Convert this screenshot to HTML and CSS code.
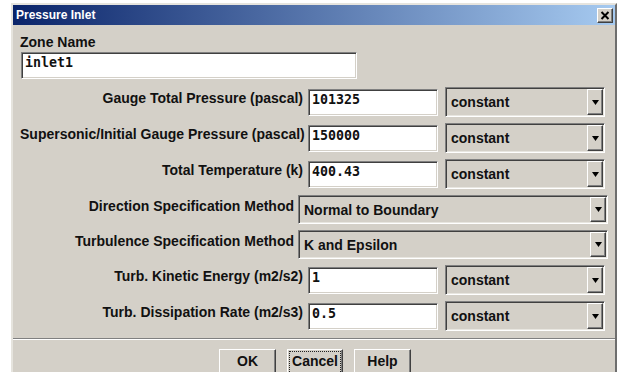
FILE: index.html
```html
<!DOCTYPE html>
<html lang="en">
<head>
  <meta charset="UTF-8">
  <title>Pressure Inlet</title>
  <link rel="stylesheet" href="styles.css">
</head>
<body>
  <div class="window">
    <div class="titlebar">
      <span class="title">Pressure Inlet</span>
      <span class="close-btn">
        <svg width="10" height="9" viewBox="0 0 10 9"><path d="M1.5 1 L8.5 8 M8.5 1 L1.5 8" stroke="#000" stroke-width="2" fill="none"/></svg>
      </span>
    </div>
    <div class="panel">
      <div class="zone-label">Zone Name</div>
      <div class="entry zone-entry">inlet1</div>

      <div class="rows">
        <!-- Pressure rows -->
        <div class="row">
          <span class="label">Gauge Total Pressure (pascal)</span>
          <div class="entry">101325</div>
          <div class="combo"><span class="combo-text">constant</span><span class="combo-btn"><svg width="7" height="5" viewBox="0 0 7 5"><path d="M0 0 H7 L3.5 5 Z" fill="#000"/></svg></span></div>
        </div>
        <div class="row">
          <span class="label">Supersonic/Initial Gauge Pressure (pascal)</span>
          <div class="entry">150000</div>
          <div class="combo"><span class="combo-text">constant</span><span class="combo-btn"><svg width="7" height="5" viewBox="0 0 7 5"><path d="M0 0 H7 L3.5 5 Z" fill="#000"/></svg></span></div>
        </div>
        <div class="row">
          <span class="label">Total Temperature (k)</span>
          <div class="entry">400.43</div>
          <div class="combo"><span class="combo-text">constant</span><span class="combo-btn"><svg width="7" height="5" viewBox="0 0 7 5"><path d="M0 0 H7 L3.5 5 Z" fill="#000"/></svg></span></div>
        </div>
        <!-- Method rows -->
        <div class="row row-wide">
          <span class="label">Direction Specification Method</span>
          <div class="combo"><span class="combo-text">Normal to Boundary</span><span class="combo-btn"><svg width="7" height="5" viewBox="0 0 7 5"><path d="M0 0 H7 L3.5 5 Z" fill="#000"/></svg></span></div>
        </div>
        <div class="row row-wide">
          <span class="label">Turbulence Specification Method</span>
          <div class="combo"><span class="combo-text">K and Epsilon</span><span class="combo-btn"><svg width="7" height="5" viewBox="0 0 7 5"><path d="M0 0 H7 L3.5 5 Z" fill="#000"/></svg></span></div>
        </div>
        <!-- Turbulence rows -->
        <div class="row">
          <span class="label">Turb. Kinetic Energy (m2/s2)</span>
          <div class="entry">1</div>
          <div class="combo"><span class="combo-text">constant</span><span class="combo-btn"><svg width="7" height="5" viewBox="0 0 7 5"><path d="M0 0 H7 L3.5 5 Z" fill="#000"/></svg></span></div>
        </div>
        <div class="row">
          <span class="label">Turb. Dissipation Rate (m2/s3)</span>
          <div class="entry">0.5</div>
          <div class="combo"><span class="combo-text">constant</span><span class="combo-btn"><svg width="7" height="5" viewBox="0 0 7 5"><path d="M0 0 H7 L3.5 5 Z" fill="#000"/></svg></span></div>
        </div>
      </div>
    </div>
    <div class="separator"></div>
    <div class="buttons">
      <div class="btn">OK</div>
      <div class="btn btn-focus"><span>Cancel</span></div>
      <div class="btn">Help</div>
    </div>
  </div>
</body>
</html>
```

FILE: styles.css
```css
html, body {
  height: 372px;
  overflow: hidden;
}
body {
  margin: 0;
  background: #fff;
  font-family: 'Liberation Sans', Arial, sans-serif;
}
.window {
  margin: 3px 0 0 11px;
  width: 602px;
  height: 380px;
  background: #d4d0c8;
  border-top: 2px solid #e6e4de;
  border-left: 2px solid #e6e4de;
  border-right: 2px solid #6e6e6e;
}
.titlebar {
  height: 20px;
  display: flex;
  align-items: center;
  justify-content: space-between;
  padding-left: 3px;
  background: linear-gradient(to right, #0a246a, #a6caf0);
}
.title {
  color: #fff;
  font-weight: bold;
  font-size: 12px;
  line-height: 14px;
}
.close-btn {
  width: 16px;
  height: 15px;
  box-sizing: border-box;
  margin-right: 2px;
  background: #d4d0c8;
  border-top: 1px solid #fff;
  border-left: 1px solid #fff;
  border-right: 1px solid #404040;
  border-bottom: 1px solid #404040;
  box-shadow: inset -1px -1px 0 #808080;
  display: flex;
  align-items: center;
  justify-content: center;
}
.panel {
  padding-left: 7px;
}
.zone-label {
  margin-top: 9px;
  font-size: 14px;
  font-weight: bold;
  line-height: 16px;
  color: #111;
}
.entry {
  box-sizing: border-box;
  height: 27px;
  background: #fff;
  border-top: 1px solid #808080;
  border-left: 1px solid #808080;
  border-right: 1px solid #fff;
  border-bottom: 1px solid #fff;
  box-shadow: inset 1px 1px 0 #404040, inset -1px -1px 0 #d4d0c8;
  padding: 2px 3px;
  font-family: 'DejaVu Sans Mono', 'Liberation Mono', monospace;
  font-weight: bold;
  font-size: 13.3px;
  line-height: 16px;
  color: #111;
}
.zone-entry {
  margin: 2px 0 0 1px;
  width: 336px;
}
.rows {
  margin-top: 8px;
  display: flex;
  flex-direction: column;
  gap: 6px;
}
.row {
  display: flex;
  align-items: flex-start;
  height: 30px;
}
.row-wide {
  height: 29px;
}
.label {
  flex: none;
  width: 283px;
  padding-right: 1px;
  padding-top: 3px;
  text-align: right;
  white-space: nowrap;
  font-size: 14px;
  font-weight: bold;
  line-height: 16px;
  color: #111;
}
.row .entry {
  margin: 2px 0 0 4px;
  width: 130px;
}
.combo {
  box-sizing: border-box;
  margin-left: 7px;
  width: 160px;
  height: 100%;
  display: flex;
  align-items: center;
  justify-content: space-between;
  padding: 1px;
  background: #d4d0c8;
  border-top: 1px solid #808080;
  border-left: 1px solid #808080;
  border-right: 1px solid #fff;
  border-bottom: 1px solid #fff;
  box-shadow: inset 1px 1px 0 #404040, inset -1px -1px 0 #e8e6e0;
}
.row-wide .label {
  width: 274px;
}
.row-wide .combo {
  margin-left: 3px;
  width: 310px;
}
.combo-text {
  padding-left: 4px;
  font-size: 14px;
  font-weight: bold;
  line-height: 16px;
  color: #111;
  white-space: nowrap;
}
.combo-btn {
  box-sizing: border-box;
  width: 16px;
  height: 100%;
  display: flex;
  align-items: center;
  justify-content: center;
  background: #d4d0c8;
  border-top: 1px solid #fff;
  border-left: 1px solid #fff;
  border-right: 1px solid #404040;
  border-bottom: 1px solid #404040;
  box-shadow: inset -1px -1px 0 #808080;
}
.separator {
  margin-top: 7px;
  border-top: 1px solid #808080;
  border-bottom: 1px solid #fff;
}
.buttons {
  margin-top: 9px;
  display: flex;
  justify-content: center;
  gap: 11px;
  padding-left: 2px;
}
.btn {
  box-sizing: border-box;
  width: 57px;
  height: 27px;
  padding-top: 3px;
  text-align: center;
  background: #d4d0c8;
  border-top: 1px solid #fff;
  border-left: 1px solid #fff;
  border-right: 1px solid #404040;
  border-bottom: 1px solid #404040;
  box-shadow: inset -1px -1px 0 #808080;
  font-size: 14px;
  font-weight: bold;
  line-height: 16px;
  color: #111;
}
.btn-focus {
  width: 56px;
  outline: 1px dotted #222;
  outline-offset: -3px;
}
```
